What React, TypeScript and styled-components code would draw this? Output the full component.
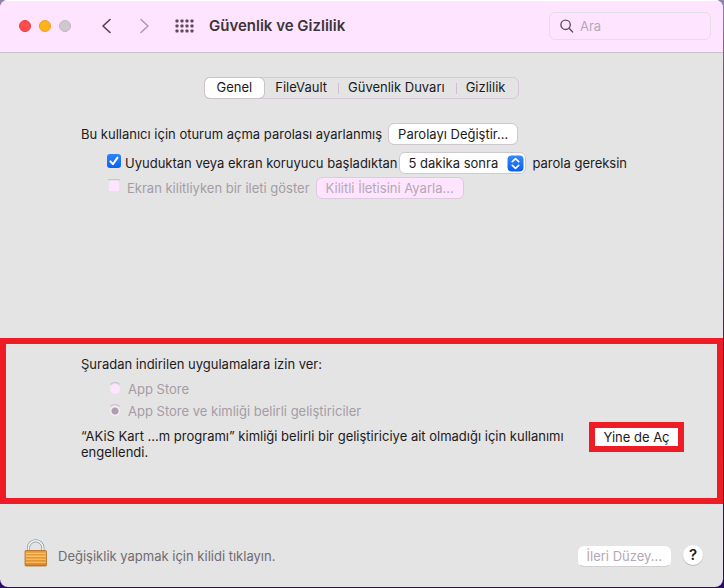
import React from "react";
import styled, { createGlobalStyle } from "styled-components";

const ink = "#1c1a1c";
const faded = "#a59ca6";
const red = "#ee1c25";
const pink = "#ffe4ff";
const surface = "#e4e4e4";

const GlobalStyle = createGlobalStyle`
  *, *::before, *::after { box-sizing: border-box; }
  body {
    margin: 0;
    background: linear-gradient(180deg, #8f88ac 0%, #8a4a78 12%, #7d3568 35%, #4a1080 62%, #2b0a6e 100%);
    font-family: Inter, "Liberation Sans", sans-serif;
    font-size: 13px;
    line-height: 16px;
    color: ${ink};
  }
  button, input, select { font: inherit; color: inherit; margin: 0; }
`;

const Window = styled.div`
  display: flex;
  flex-direction: column;
  min-height: calc(100vh - 1px);
  margin: 0 1px 1px 0;
  border-radius: 8px;
  background: ${surface};
  overflow: hidden;
`;

const TitleBar = styled.header`
  display: flex;
  align-items: center;
  height: 53px;
  padding: 0 12px 2px 19px;
  background: ${pink};
  border-top: 1px solid #fff;
  border-bottom: 1px solid #c9c4c9;
`;

const Lights = styled.div`
  display: flex;
  gap: 8px;
`;

const Light = styled.button<{ $fill: string; $edge: string }>`
  width: 12px;
  height: 12px;
  padding: 0;
  border: 1px solid ${(p) => p.$edge};
  border-radius: 50%;
  background: ${(p) => p.$fill};
`;

const Nav = styled.nav`
  display: flex;
  align-items: center;
  gap: 22px;
  margin-left: 28px;
`;

const IconButton = styled.button`
  display: flex;
  padding: 0;
  border: 0;
  background: none;
`;

const Title = styled.h1`
  flex: 1;
  margin: 0 0 0 15px;
  font-size: 15px;
  line-height: 20px;
  font-weight: 600;
  color: #3b353b;
`;

const Search = styled.label`
  display: flex;
  align-items: center;
  gap: 6px;
  width: 162px;
  height: 28px;
  padding: 0 10px;
  border: 1px solid #e5dde5;
  border-radius: 6px;
`;

const SearchInput = styled.input`
  flex: 1;
  min-width: 0;
  padding: 0;
  border: 0;
  background: none;
  outline: none;
  &::placeholder { color: #b3a9b3; opacity: 1; }
`;

const Tabs = styled.div`
  display: flex;
  align-self: center;
  height: 22px;
  margin-top: 24px;
  border: 1px solid #d6c6d8;
  border-radius: 6px;
`;

const Tab = styled.button<{ $active?: boolean; $divided?: boolean }>`
  position: relative;
  padding: 0 ${(p) => (p.$active ? "12px" : "11px")} 2px ${(p) => (p.$active ? "12px" : p.$divided ? "10px" : "11px")};
  border: 0;
  border-radius: 5px;
  background: ${(p) => (p.$active ? "#fff" : "none")};
  box-shadow: ${(p) => (p.$active ? "0 0 0 1px #c9c3c9" : "none")};
  &:last-child { padding-right: 13px; }
  &::before {
    content: "";
    position: absolute;
    left: 0;
    top: 5px;
    height: 11px;
    border-left: ${(p) => (p.$divided ? "1px solid #d3bdd5" : "0")};
  }
`;

const Settings = styled.section`
  display: flex;
  flex-direction: column;
  gap: 3px;
  margin: 24px 0 139px;
  padding-left: 81px;
`;

const Row = styled.div<{ $indent?: boolean; $spaced?: boolean }>`
  display: flex;
  align-items: center;
  height: 22px;
  margin-bottom: ${(p) => (p.$spaced ? "4px" : "0")};
  padding-left: ${(p) => (p.$indent ? "26px" : "0")};
`;

const RowText = styled.span`
  margin-right: 6px;
`;

const PushButton = styled.button`
  height: 22px;
  padding: 0 9px;
  border: 1px solid #cfc8cf;
  border-radius: 6px;
  background: #fff;
  background-clip: padding-box;
  white-space: nowrap;
  &:disabled {
    color: #b3a8b4;
    background: ${pink};
    border-color: #dccbdd;
  }
`;

const Choice = styled.label<{ $off?: boolean }>`
  display: flex;
  align-items: center;
  gap: ${(p) => (p.$off ? "6px" : "4px")};
  margin-right: ${(p) => (p.$off ? "6px" : "2px")};
  color: ${(p) => (p.$off ? faded : ink)};
`;

const TickHolder = styled.span`
  display: grid;
  margin-bottom: 4px;
  > * { grid-area: 1 / 1; }
`;

const TickBox = styled.input`
  appearance: none;
  width: 14px;
  height: 14px;
  border-radius: 3px;
  &:checked { background: linear-gradient(#2f83fb, #0a62f2); }
  &:disabled {
    padding: 1px;
    border: 1px solid transparent;
    border-top-color: #cdc3ce;
    background: ${pink};
    background-clip: content-box;
  }
`;

const Radio = styled.input`
  appearance: none;
  width: 14px;
  height: 14px;
  padding: 1px;
  border: 1px solid transparent;
  border-top-color: #cbbfcc;
  border-radius: 50%;
  background: ${pink};
  background-clip: content-box;
  &:checked { background: radial-gradient(circle, #aaa2aa 0 3px, ${pink} 4px) content-box; }
`;

const SelectHolder = styled.span`
  display: grid;
  align-items: center;
  margin-right: 6px;
  > * { grid-area: 1 / 1; }
  > svg { justify-self: end; margin-right: 2px; pointer-events: none; }
`;

const Select = styled.select`
  appearance: none;
  width: 127px;
  height: 22px;
  padding: 0 24px 0 8px;
  border: 1px solid #cfc8cf;
  border-radius: 6px;
  background: #fff;
`;

const Panel = styled.section`
  display: flex;
  flex-direction: column;
  height: 166px;
  padding: 12px 33px 0 75px;
  border: 6px solid ${red};
`;

const Group = styled.fieldset`
  display: flex;
  flex-direction: column;
  gap: 6px;
  margin: 0;
  padding: 0 0 0 27px;
  border: 0;
`;

const Legend = styled.legend`
  margin: 0 0 9px -27px;
  padding: 0;
`;

const Blocked = styled.div`
  display: flex;
  justify-content: space-between;
  align-items: flex-start;
  margin-top: 3px;
`;

const Message = styled.p`
  max-width: 492px;
  margin: 6px 0 0;
`;

const OpenButton = styled.button`
  width: 95px;
  height: 30px;
  padding: 0;
  border: 6px solid ${red};
  background: #fff;
  white-space: nowrap;
`;

const Footer = styled.footer`
  display: flex;
  align-items: center;
  margin-top: auto;
  padding: 0 20px 20px 24px;
`;

const LockText = styled.span`
  flex: 1;
  padding: 6px 0 0 10px;
  color: #716b71;
`;

const Advanced = styled(PushButton)`
  height: 21px;
  padding: 0 8px;
  margin-top: 6px;
  &:disabled {
    background: #fff;
    border-color: transparent;
    border-bottom-color: #cfcfcf;
  }
`;

const Help = styled.button`
  width: 20px;
  height: 20px;
  margin: 4px 0 0 12px;
  padding: 0;
  border: 0;
  border-radius: 50%;
  background: #fff;
  box-shadow: 0 1px 1px #bdbdbd;
  font-size: 15px;
  font-weight: 600;
`;

const Chevron = ({ left }: { left?: boolean }) => (
  <svg width="16" height="18" viewBox="0 0 16 18" fill="none" stroke={left ? "#51424f" : "#ad9dad"} strokeWidth="1.6" strokeLinecap="round" strokeLinejoin="round">
    <path d={left ? "M11 2.5 4 9l7 6.5" : "M4 2.5 11 9l-7 6.5"} />
  </svg>
);

const Grid = () => (
  <svg width="19" height="14" viewBox="0 0 19 14" fill="#5b4a59">
    {[0, 5, 10].map((y) =>
      [0, 5, 10, 15].map((x) => <rect key={`${x}-${y}`} x={x + 0.5} y={y + 0.5} width="3" height="3" rx="0.8" />)
    )}
  </svg>
);

const Magnifier = () => (
  <svg width="14" height="14" viewBox="0 0 14 14" fill="none" stroke="#5e545e" strokeWidth="1.4" strokeLinecap="round">
    <circle cx="5.6" cy="5.8" r="4.7" />
    <path d="m9.1 9.3 3.5 3.6" />
  </svg>
);

const Check = () => (
  <svg width="14" height="14" viewBox="0 0 14 14" fill="none" stroke="#fff" strokeWidth="2" strokeLinecap="round" strokeLinejoin="round" pointerEvents="none">
    <path d="m3.4 7.4 2.5 2.8 4.6-6.6" />
  </svg>
);

const Stepper = () => (
  <svg width="17" height="17" viewBox="0 0 17 17">
    <defs>
      <linearGradient id="stepper" x2="0" y2="1">
        <stop stopColor="#3388fc" />
        <stop offset="1" stopColor="#0a60f0" />
      </linearGradient>
    </defs>
    <rect width="16" height="16" x="0.5" y="0.5" rx="4" fill="url(#stepper)" />
    <path d="m5.3 6.7 3.2-3 3.2 3M5.3 10.3l3.2 3 3.2-3" fill="none" stroke="#fff" strokeWidth="1.6" strokeLinecap="round" strokeLinejoin="round" />
  </svg>
);

const Lock = () => (
  <svg width="24" height="28" viewBox="0 0 24 28">
    <defs>
      <linearGradient id="brass" x2="0" y2="1">
        <stop stopColor="#d98a2b" />
        <stop offset="0.2" stopColor="#f7b34c" />
        <stop offset="0.8" stopColor="#eb9a2e" />
        <stop offset="1" stopColor="#c77a1e" />
      </linearGradient>
    </defs>
    <path d="M4.5 13V9a7.2 7.2 0 0 1 14.4 0v4" fill="none" stroke="#8c959c" strokeWidth="3" />
    <path d="M4.5 13V9a7.2 7.2 0 0 1 14.4 0v4" fill="none" stroke="#f0f5f8" strokeWidth="1.6" />
    <rect x="1" y="11.5" width="21.5" height="15.5" rx="1" fill="url(#brass)" stroke="#b06f22" strokeWidth="0.8" />
    <path d="M2 14.5h19.5M2 17.5h19.5M2 20.5h19.5M2 23.5h19.5" stroke="#fbc874" strokeWidth="0.7" />
    <path d="M2 15.5h19.5M2 18.5h19.5M2 21.5h19.5M2 24.5h19.5" stroke="#dd8f33" strokeWidth="0.7" />
  </svg>
);

export default function App() {
  return (
    <>
      <GlobalStyle />
      <Window lang="tr">
        <TitleBar>
          <Lights>
            <Light $fill="#fe4d4b" $edge="#e5403f" aria-label="Kapat" />
            <Light $fill="#ffb21c" $edge="#eba11a" aria-label="Küçült" />
            <Light $fill="#cdc9cd" $edge="#c5b4c6" aria-label="Büyüt" disabled />
          </Lights>
          <Nav>
            <IconButton aria-label="Geri"><Chevron left /></IconButton>
            <IconButton aria-label="İleri" disabled><Chevron /></IconButton>
            <IconButton aria-label="Tümünü Göster"><Grid /></IconButton>
          </Nav>
          <Title>Güvenlik ve Gizlilik</Title>
          <Search>
            <Magnifier />
            <SearchInput type="search" placeholder="Ara" aria-label="Ara" />
          </Search>
        </TitleBar>

        <Tabs role="tablist">
          <Tab role="tab" aria-selected="true" $active>Genel</Tab>
          <Tab role="tab" aria-selected="false">FileVault</Tab>
          <Tab role="tab" aria-selected="false" $divided>Güvenlik Duvarı</Tab>
          <Tab role="tab" aria-selected="false" $divided>Gizlilik</Tab>
        </Tabs>

        <Settings>
          <Row $spaced>
            <RowText>Bu kullanıcı için oturum açma parolası ayarlanmış</RowText>
            <PushButton>Parolayı Değiştir...</PushButton>
          </Row>
          <Row $indent>
            <Choice>
              <TickHolder><TickBox type="checkbox" defaultChecked /><Check /></TickHolder>
              Uyuduktan veya ekran koruyucu başladıktan
            </Choice>
            <SelectHolder>
              <Select aria-label="Süre"><option>5 dakika sonra</option></Select>
              <Stepper />
            </SelectHolder>
            parola gereksin
          </Row>
          <Row $indent>
            <Choice $off>
              <TickHolder><TickBox type="checkbox" disabled /></TickHolder>
              Ekran kilitliyken bir ileti göster
            </Choice>
            <PushButton disabled>Kilitli İletisini Ayarla...</PushButton>
          </Row>
        </Settings>

        <Panel>
          <Group>
            <Legend>Şuradan indirilen uygulamalara izin ver:</Legend>
            <Choice $off><Radio type="radio" name="source" disabled />App Store</Choice>
            <Choice $off><Radio type="radio" name="source" disabled defaultChecked />App Store ve kimliği belirli geliştiriciler</Choice>
          </Group>
          <Blocked>
            <Message>“AKiS Kart ...m programı” kimliği belirli bir geliştiriciye ait olmadığı için kullanımı engellendi.</Message>
            <OpenButton>Yine de Aç</OpenButton>
          </Blocked>
        </Panel>

        <Footer>
          <IconButton aria-label="Kilit"><Lock /></IconButton>
          <LockText>Değişiklik yapmak için kilidi tıklayın.</LockText>
          <Advanced disabled>İleri Düzey...</Advanced>
          <Help aria-label="Yardım">?</Help>
        </Footer>
      </Window>
    </>
  );
}
